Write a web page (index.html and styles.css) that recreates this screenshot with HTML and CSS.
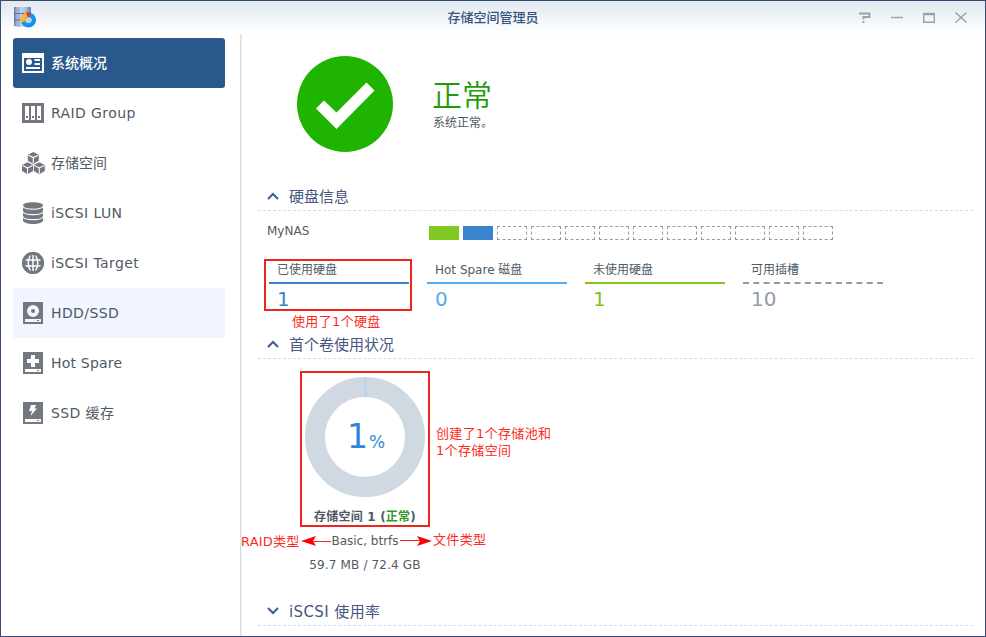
FILE: index.html
```html
<!DOCTYPE html>
<html lang="zh-CN">
<head>
<meta charset="utf-8">
<title>存储空间管理员</title>
<link rel="stylesheet" href="styles.css">
</head>
<body>
<div class="window">
  <header class="titlebar">
    <svg class="app-icon" width="24" height="24" viewBox="0 0 24 24">
      <defs><linearGradient id="steel" x2="1" y2="0"><stop offset="0" stop-color="#5f7fae"/><stop offset=".3" stop-color="#c9d6ea"/><stop offset=".65" stop-color="#b4c4dd"/><stop offset="1" stop-color="#6583b4"/></linearGradient></defs>
      <path d="M1 1h17v18q-8 3-17 1z" fill="url(#steel)"/>
      <path d="M1 7.500h17M1 14h17" stroke="#5d7398" stroke-width="1.200" fill="none"/>
      <path d="M6 1v20" stroke="#7f93b5" fill="none"/>
      <circle cx="15.500" cy="14" r="5.300" fill="none" stroke="#1592ee" stroke-width="4.600"/>
      <path d="M8 16.500A7.800 7.800 0 0 1 13.300 6.500L14.500 10.800A3 3 0 0 0 12.500 15z" fill="#ffb91f"/>
      <path d="M13 6.600A7.600 7.600 0 0 1 17.500 6.600L16.500 11H14.600z" fill="#e8372c"/>
      <circle cx="15.500" cy="14.200" r="2.900" fill="#c6d0de"/>
    </svg>
    <h1 class="title">存储空间管理员</h1>
    <div class="controls">
      <svg width="12" height="12" viewBox="0 0 12 12"><path d="M0 1.500h10.500v3.500H4.500V7.500M4.500 9v2" class="ctl help"/></svg>
      <svg width="12" height="12" viewBox="0 0 12 12"><path d="M0 5.500h12" class="ctl"/></svg>
      <svg width="12" height="12" viewBox="0 0 12 12"><path d="M.7 1v9.300h10.600V1" class="ctl"/><path d="M0 2h12" class="ctl thick"/></svg>
      <svg width="12" height="12" viewBox="0 0 12 12"><path d="M.5 .5l11 10M11.500 .5l-11 10" class="ctl"/></svg>
    </div>
  </header>
  <div class="body">
    <nav class="sidebar">
      <a class="item active">
        <svg width="24" height="24" viewBox="0 0 24 24"><path fill-rule="evenodd" fill="#fff" d="M1 2h22v20H1zM3 7v13h18V7z"/><circle cx="8" cy="11" r="3" fill="#fff"/><path d="M13.500 9H19M13.500 13H19M5 17h14" stroke="#fff" stroke-width="2"/></svg>
        <span>系统概况</span></a>
      <a class="item">
        <svg width="24" height="24" viewBox="0 0 24 24"><path fill="#73777f" d="M1 2h22v20H1z"/><path fill="#fff" d="M4 5h4v14H4zM10 5h4v14h-4zM16 5h4v14h-4z"/><path fill="#73777f" d="M5 15h2v2H5zM11 15h2v2h-2zM17 15h2v2h-2z"/></svg>
        <span class="latin">RAID Group</span></a>
      <a class="item">
        <svg width="24" height="24" viewBox="0 0 24 24"><defs><g id="cube"><path d="M0-6l5.500 2.800v6L0 6l-5.500-3.200v-6z" fill="#73777f"/><path d="M-5-2.700L0-.4l5-2.300M0-.4V5.500" stroke="#fff" stroke-width="1.100" fill="none"/></g></defs><use href="#cube" x="12.300" y="7"/><use href="#cube" x="6.500" y="17.300"/><use href="#cube" x="18.300" y="17.300"/></svg>
        <span>存储空间</span></a>
      <a class="item">
        <svg width="24" height="24" viewBox="0 0 24 24"><path d="M2 4.500C2 .1 22 .1 22 4.500v15c0 4.600-20 4.600-20 0z" fill="#73777f"/><path d="M2 5.200c1 4 19 4 20 0M2 10.600c1 4 19 4 20 0M2 15.600c1 4 19 4 20 0" stroke="#fff" stroke-width="1.100" fill="none"/></svg>
        <span class="latin">iSCSI LUN</span></a>
      <a class="item">
        <svg width="24" height="24" viewBox="0 0 24 24"><circle cx="12" cy="12" r="11" fill="#73777f"/><g fill="none" stroke="#fff" stroke-width="1.500"><path d="M12 4v16M4 9h16M4 15h16"/><path d="M9.500 4Q5 12 9.500 20M14.500 4Q19 12 14.500 20"/></g><circle cx="12" cy="12" r="9.500" fill="none" stroke="#73777f" stroke-width="2.800"/></svg>
        <span class="latin">iSCSI Target</span></a>
      <a class="item hover">
        <svg width="24" height="24" viewBox="0 0 24 24"><path fill="#73777f" d="M2 1h20v22H2z"/><circle cx="12" cy="10" r="4" fill="none" stroke="#f0f5ff" stroke-width="4"/><path fill="#f0f5ff" d="M4 18h16v3H4z"/><path fill="#73777f" d="M16 19h2v1h-2z"/></svg>
        <span class="latin">HDD/SSD</span></a>
      <a class="item">
        <svg width="24" height="24" viewBox="0 0 24 24"><path fill="#73777f" d="M2 1h20v22H2z"/><path fill="#fff" d="M10 4h4v4h4v4h-4v4h-4v-4H6V8h4zM4 18h16v3H4z"/><path fill="#73777f" d="M16 19h2v1h-2z"/></svg>
        <span class="latin narrow">Hot Spare</span></a>
      <a class="item">
        <svg width="24" height="24" viewBox="0 0 24 24"><path fill="#73777f" d="M2 1h20v22H2z"/><path fill="#fff" d="M10 4h5l-1.500 3.500H16L9.500 15l1.500-5H8zM4 18h16v3H4z"/><path fill="#73777f" d="M16 19h2v1h-2z"/></svg>
        <span class="latin">SSD 缓存</span></a>
    </nav>
    <main class="content">
      <section class="health">
        <svg width="96" height="96" viewBox="0 0 96 96"><circle cx="48" cy="48" r="48" fill="#1eb400"/><path d="M19 52.500L27 44.500 39.500 56.500 69.500 26.500 77.500 34.500 39.500 73z" fill="#fff"/></svg>
        <div class="health-text">
          <div class="status">正常</div>
          <div class="status-note">系统正常。</div>
        </div>
      </section>

      <section class="disks">
        <h2 class="section-head"><svg width="12" height="8" viewBox="0 0 12 8"><path d="M1 7l5-5 5 5"/></svg><span>硬盘信息</span></h2>
        <div class="nas-row">
          <span class="nas-name">MyNAS</span>
          <div class="slots">
            <i class="slot green"></i><i class="slot blue"></i><i class="slot"></i><i class="slot"></i><i class="slot"></i><i class="slot"></i><i class="slot"></i><i class="slot"></i><i class="slot"></i><i class="slot"></i><i class="slot"></i><i class="slot"></i>
          </div>
        </div>
        <div class="stats">
          <div class="stat used"><div class="stat-label">已使用硬盘</div><div class="stat-value">1</div><span class="note note-used">使用了1个硬盘</span></div>
          <div class="stat spare"><div class="stat-label">Hot Spare 磁盘</div><div class="stat-value">0</div></div>
          <div class="stat unused"><div class="stat-label">未使用硬盘</div><div class="stat-value">1</div></div>
          <div class="stat free"><div class="stat-label">可用插槽</div><div class="stat-value">10</div></div>
        </div>
      </section>

      <section class="volumes">
        <h2 class="section-head"><svg width="12" height="8" viewBox="0 0 12 8"><path d="M1 7l5-5 5 5"/></svg><span>首个卷使用状况</span></h2>
        <div class="volume">
          <div class="donut">
            <svg width="120" height="120" viewBox="0 0 120 120"><circle cx="60" cy="60" r="50" fill="none" stroke="#d0d8e1" stroke-width="20"/><path d="M60.500 0v20" stroke="#a9d2f7" stroke-width="1.500"/></svg>
            <div class="percent"><b>1</b><span>%</span></div>
          </div>
          <div class="volume-name">存储空间 1 (<em>正常</em>)</div>
          <div class="volume-type">Basic, btrfs</div>
          <div class="volume-size">59.7 MB / 72.4 GB</div>
          <span class="note note-pool">创建了1个存储池和<br>1个存储空间</span>
          <span class="note note-raid">RAID类型</span>
          <svg class="arrow arrow-left" width="30" height="10" viewBox="0 0 30 10"><path d="M0 5L15 0 12 5 15 10z" fill="#f00"/><path d="M12 5.500h18" stroke="#f22"/></svg>
          <svg class="arrow arrow-right" width="32" height="10" viewBox="0 0 32 10"><path d="M32 5L17 0 20 5 17 10z" fill="#f00"/><path d="M0 4.500h20" stroke="#f22"/></svg>
          <span class="note note-fs">文件类型</span>
        </div>
      </section>

      <section>
        <h2 class="section-head"><svg width="12" height="8" viewBox="0 0 12 8"><path d="M1 1l5 5 5-5"/></svg><span class="latin">iSCSI 使用率</span></h2>
      </section>
    </main>
  </div>
</div>
</body>
</html>
```
FILE: styles.css
```css
*, *::before, *::after { box-sizing: border-box; }
body {
  margin: 0;
  font: 12px/16px "DejaVu Sans", "Noto Sans CJK SC", sans-serif;
  color: #505a64;
}
svg { display: block; flex: none; }
.window {
  width: 986px;
  height: 637px;
  border: 1px solid #3c4a77;
  background: #fff;
  display: flex;
  flex-direction: column;
  overflow: hidden;
}
.titlebar {
  height: 33px;
  flex: none;
  display: grid;
  grid-template-columns: 120px 1fr 120px;
  align-items: center;
  background: linear-gradient(#e0e9f0, #fff);
}
.app-icon { margin-left: 12px; }
.title {
  margin: 0;
  text-align: center;
  font-size: 13px;
  line-height: 20px;
  font-weight: 500;
  color: #36537f;
}
.controls { display: flex; gap: 20px; justify-content: flex-end; padding-right: 18px; }
.ctl { fill: none; stroke: #9aa0a5; stroke-width: 1.4; }
.ctl.thick { stroke-width: 2.4; }
.ctl.help { stroke-width: 1.8; }
.body { flex: 1; display: flex; min-height: 0; }
.sidebar {
  width: 239px;
  flex: none;
  padding: 4px 14px 0 12px;
  font-size: 14px;
}
.item {
  height: 50px;
  width: 212px;
  display: flex;
  align-items: center;
  gap: 6px;
  padding-left: 8px;
  border-radius: 3px;
  color: #505a64;
  white-space: nowrap;
}
.item.active { background: #29588c; color: #fff; font-weight: 500; }
.item.hover { background: #f0f5ff; }
.latin { letter-spacing: .4px; }
.latin.narrow { letter-spacing: .2px; }
.content {
  flex: 1;
  min-width: 0;
  padding: 22px 12px 0 17px;
  border-left: 1px solid #d9dce0;
  box-shadow: inset 2px 0 2px -1px #eceef1;
}
.health { display: flex; gap: 39px; padding-left: 39px; height: 129px; }
.health-text { padding-top: 22px; }
.status { font-size: 30px; line-height: 36px; font-weight: 350; color: #1d9b0c; }
.status-note { line-height: 16px; margin: 1px 0 0 1px; }
.section-head {
  margin: 0;
  height: 26px;
  display: flex;
  align-items: center;
  gap: 10px;
  padding: 0 0 2px 9px;
  font-size: 15px;
  line-height: 22px;
  font-weight: 400;
  color: #45567f;
  border-bottom: 1px dashed #d5dee0;
}
.section-head path { fill: none; stroke: #3c5d91; stroke-width: 2; }
.section-head svg { position: relative; top: -1px; }
.disks { height: 148px; }
.nas-row { display: flex; padding: 12px 0 0 9px; }
.nas-name { width: 162px; }
.slots { display: flex; gap: 4px; padding-top: 3px; }
.slot { width: 30px; height: 14px; border: 1px dashed #999; }
.slot.green { background: #82c822; border: 0; }
.slot.blue { background: #3884ce; border: 0; }
.stats { display: flex; gap: 18px; padding: 21px 0 0 11px; }
.stat { width: 140px; position: relative; }
.stat-label { height: 23px; padding: 1px 0 0 8px; border-bottom: 2px solid; white-space: nowrap; }
.stat-value { padding: 4px 0 0 8px; font-size: 20px; line-height: 22px; }
.used .stat-label { border-color: #3884ce; }
.used .stat-value { color: #3884ce; }
.spare .stat-label { border-color: #55aaf2; }
.spare .stat-value { color: #55aaf2; }
.unused .stat-label { border-color: #82c322; }
.unused .stat-value { color: #82c322; }
.free .stat-label { border-color: #999; border-bottom-style: dashed; }
.free .stat-value { color: #919da8; }
.used::after {
  content: "";
  position: absolute;
  left: -5px;
  top: -2px;
  width: 148px;
  height: 52px;
  border: 2px solid #ef241b;
}
.note { position: absolute; color: #fb2b25; font-size: 13px; line-height: 17px; letter-spacing: .35px; white-space: nowrap; }
.note-used { left: 23px; top: 52px; }
.volumes { height: 267px; }
.volume {
  position: relative;
  width: 130px;
  margin: 12px 0 0 42px;
  padding-top: 6px;
  display: flex;
  flex-direction: column;
  align-items: center;
  white-space: nowrap;
}
.volume::before {
  content: "";
  position: absolute;
  left: 0;
  top: 0;
  width: 130px;
  height: 156px;
  border: 2px solid #ef241b;
}
.donut { display: grid; }
.donut > * { grid-area: 1 / 1; }
.percent { place-self: center; display: flex; align-items: baseline; gap: 1px; padding-left: 2px; color: #2e87dd; }
.percent b { font-size: 33px; line-height: 40px; font-weight: 400; }
.percent span { font-size: 17px; }
.volume-name { margin-top: 12px; font-weight: 700; letter-spacing: .2px; }
.volume-name em { font-style: normal; color: #33992b; }
.volume-type { margin-top: 8px; }
.volume-size { margin-top: 8px; letter-spacing: .15px; }
.note-pool { left: 136px; top: 54px; }
.note-raid { left: -59px; top: 162px; letter-spacing: .2px; }
.note-fs { left: 133px; top: 160px; }
.arrow { position: absolute; top: 165px; }
.arrow-left { left: 1px; }
.arrow-right { left: 100px; }
```
